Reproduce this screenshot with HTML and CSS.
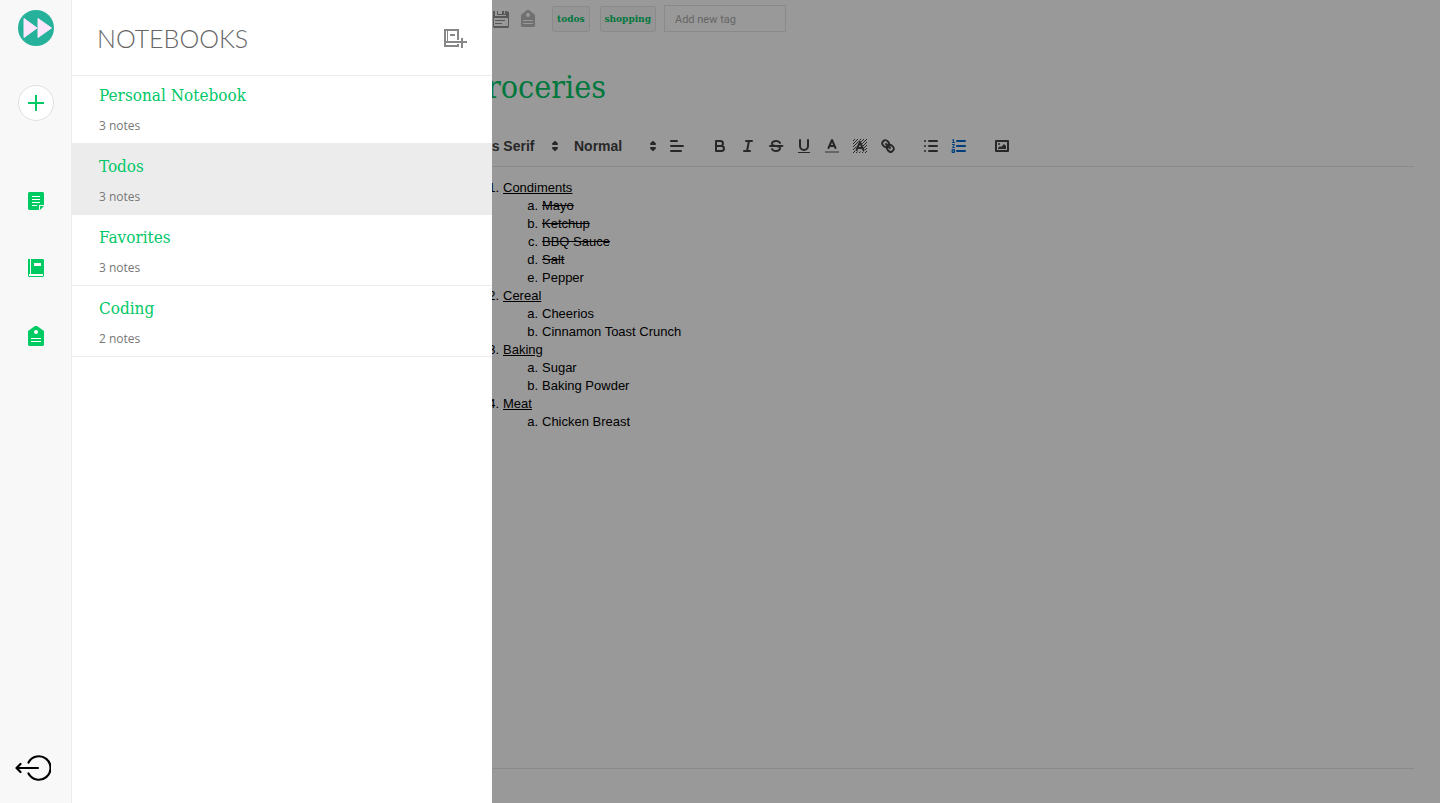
FILE: index.html
```html
<!DOCTYPE html>
<html lang="en">
<head>
<meta charset="utf-8">
<title>Notebooks</title>
<link rel="stylesheet" href="styles.css">
</head>
<body>
<div class="app">
  <nav class="sidebar" aria-label="Main">
    <a class="logo" href="#" aria-label="Home"><svg width="36" height="36" viewBox="0 0 36 36"><circle cx="18" cy="18" r="18" fill="#26b29a"/><path d="M6 8.500l13 9.500-13 9.500zM20 8.500L33.500 18 20 27.500z" fill="#fbe6fb" stroke="#fbe6fb" stroke-linejoin="round"/></svg></a>
    <button class="add" aria-label="New note"><svg width="16" height="16" viewBox="0 0 16 16"><path d="M8 0v16M0 8h16" stroke="#00c965" stroke-width="2"/></svg></button>
    <div class="links">
      <a href="#" aria-label="Notes"><svg width="16" height="18" viewBox="0 0 16 18"><path fill="#00cb63" d="M1 0h14l1 1v12h-5v5H1l-1-1V1z"/><path fill="#00cb63" d="M12 14h4l-4 4z"/><path stroke="#fff" d="M4 4.500h8M4 7.500h8M4 10.500h8M4 13.500h5"/></svg></a>
      <a href="#" aria-label="Notebooks"><svg width="16" height="18" viewBox="0 0 16 18"><path fill="#00cb63" d="M0 0h2v14H0zM3 0h12l1 1v14H3zM0 13h2v2h14v2l-1 1H1l-1-1z"/><path fill="#fff" d="M6 4h7v3H6zM1 15h14v2H1z"/></svg></a>
      <a href="#" aria-label="Tags"><svg width="16" height="20" viewBox="0 0 16 20"><path fill="#00cb63" d="M7 0h2l7 5v14l-1 1H1l-1-1V5z"/><circle cx="8" cy="6" r="2" fill="#fff"/><path stroke="#fff" d="M3 12.500h10M3 15.500h10"/></svg></a>
    </div>
    <button class="logout" aria-label="Log out"><svg width="36" height="26" viewBox="0 0 36 26" fill="none" stroke="#000" stroke-width="2.200" stroke-linecap="round" stroke-linejoin="round"><path d="M13.500 7.500a11.700 11.700 0 1 1 0 11M23 13H1.500M5.500 9l-4 4 4 4"/></svg></button>
  </nav>

  <main class="note">
    <div class="note-bar">
      <button class="bar-icon" aria-label="Save"><svg width="17" height="18" viewBox="0 0 17 18"><path fill="#929292" d="M1 1h2v5h11V1l3 1v15l-1 1H2l-1-1zM5 1h9v4H5z"/><path fill="#fff" d="M6 1h4v3H6zM12 1h1v3h-1zM2 8h14v8H2z"/><path stroke="#929292" d="M3 10.500h10M3 13.500h7"/></svg></button>
      <button class="bar-icon tag-icon" aria-label="Tags"><svg width="14" height="17" viewBox="0 0 14 17"><path fill="#bbb" d="M6 0h2l6 5v11l-1 1H1l-1-1V5z"/><circle cx="7" cy="5" r="2" fill="#fff"/><path stroke="#fff" d="M2 10.500h10M2 13.500h10"/></svg></button>
      <a class="tag" href="#">todos</a>
      <a class="tag" href="#">shopping</a>
      <input class="tag-input" type="text" placeholder="Add new tag" aria-label="Add new tag">
    </div>
    <h1 class="note-title">Groceries</h1>
    <div class="toolbar">
      <div class="formats">
        <label class="picker font"><select aria-label="Font"><option>Sans Serif</option></select><svg viewBox="0 0 18 18"><path class="arrow" d="M7 11l2 2 2-2zM7 7l2-2 2 2z"/></svg></label>
        <label class="picker size"><select aria-label="Size"><option>Normal</option></select><svg viewBox="0 0 18 18"><path class="arrow" d="M7 11l2 2 2-2zM7 7l2-2 2 2z"/></svg></label>
        <button aria-label="Align"><svg viewBox="0 0 18 18"><path d="M3 9h12M3 14h10M3 4h6"/></svg></button>
      </div>
      <div class="formats">
        <button aria-label="Bold"><svg viewBox="0 0 18 18"><path d="M5 4h4.500A2.500 2.500 0 0 1 12 6.500 2.500 2.500 0 0 1 9.500 9H5zM5 9h5.500a2.500 2.500 0 0 1 0 5H5z"/></svg></button>
        <button aria-label="Italic"><svg viewBox="0 0 18 18"><path d="M7 4h6M5 14h6M8 14l2-10"/></svg></button>
        <button aria-label="Strike"><svg viewBox="0 0 18 18"><path class="thin" d="M15.500 8.500h-13v1h13z"/><path class="fill" d="M9.007 8C6.542 7.791 6 7.519 6 6.500 6 5.792 7.283 5 9 5c1.571 0 2.765.679 2.969 1.309a1 1 0 0 0 1.900-.617C13.356 4.106 11.354 3 9 3 6.200 3 4 4.538 4 6.500a3.200 3.200 0 0 0 .5 1.843zM8.984 10C11.457 10.208 12 10.479 12 11.500c0 .708-1.283 1.500-3 1.500-1.571 0-2.765-.679-2.969-1.309a1 1 0 1 0-1.900.617C4.644 13.894 6.646 15 9 15c2.800 0 5-1.538 5-3.500a3.200 3.200 0 0 0-.5-1.843z"/></svg></button>
        <button aria-label="Underline"><svg viewBox="0 0 18 18"><path d="M5 3v6a4 4 0 0 0 4 4 4 4 0 0 0 4-4V3"/><rect class="fill" x="3" y="15" width="12" height="1"/></svg></button>
        <button aria-label="Text color"><svg viewBox="0 0 18 18"><path class="muted" d="M2 15h14"/><path d="M5.500 11L9 3l3.500 8M11.600 9H6.400"/></svg></button>
        <button aria-label="Background color"><svg viewBox="0 0 18 18"><defs><pattern id="hatch" width="3" height="3" patternUnits="userSpaceOnUse"><path class="fill" d="M2 0h1v1H2zM1 1h1v1H1zM0 2h1v1H0z"/></pattern></defs><path fill="url(#hatch)" class="plain" d="M2 2h14v14H2z"/><path class="halo" d="M5.500 13L9 5l3.500 8z"/><path d="M5.500 13L9 5l3.500 8M11.600 11H6.400"/></svg></button>
        <button aria-label="Link"><svg viewBox="0 0 18 18"><path d="M7 7l4 4M8.900 4.577a3.476 3.476 0 0 1 .36 4.679A3.476 3.476 0 0 1 4.577 8.900C3.185 7.500 2.035 6.400 4.217 4.217S7.500 3.185 8.900 4.577zM13.423 9.100a3.476 3.476 0 0 0-4.679-.36 3.476 3.476 0 0 0 .36 4.679c1.392 1.392 2.500 2.542 4.679.36s1.032-3.287-.36-4.679z"/></svg></button>
      </div>
      <div class="formats">
        <button aria-label="Bullet list"><svg viewBox="0 0 18 18"><path d="M7 4h8M7 9h8M7 14h8"/><path d="M3 4h0M3 9h0M3 14h0"/></svg></button>
        <button class="active" aria-label="Numbered list" aria-pressed="true"><svg viewBox="0 0 18 18"><path d="M7 4h8M7 9h8M7 14h8"/><path class="thin" d="M2.500 5.500h2M3.500 5.500v-3l-1 .5M2.500 7.500h2l-2 3h2M2.500 12.500h2v3h-2zM2.500 14h2"/></svg></button>
      </div>
      <div class="formats">
        <button aria-label="Image"><svg viewBox="0 0 18 18"><path d="M3 4h12v10H3z"/><circle class="fill" cx="6" cy="7" r="1"/><path class="fill" d="M5 12v-1l2-2 1 1 3-3 2 2v3z"/></svg></button>
      </div>
    </div>
    <div class="editor">
      <ol>
        <li><u>Condiments</u><ol><li><s>Mayo</s></li><li><s>Ketchup</s></li><li><s>BBQ Sauce</s></li><li><s>Salt</s></li><li>Pepper</li></ol></li>
        <li><u>Cereal</u><ol><li>Cheerios</li><li>Cinnamon Toast Crunch</li></ol></li>
        <li><u>Baking</u><ol><li>Sugar</li><li>Baking Powder</li></ol></li>
        <li><u>Meat</u><ol><li>Chicken Breast</li></ol></li>
      </ol>
    </div>
  </main>

  <div class="overlay">
    <section class="drawer" aria-label="Notebooks">
      <header class="drawer-head">
        <h2>NOTEBOOKS</h2>
        <button aria-label="New notebook"><svg width="24" height="20" viewBox="0 0 24 20" fill="none" stroke="#878787"><path stroke-width="2" d="M15 12V2H2v16h13v-2M2 14h22M19 10v10"/><path d="M4.500 3v10"/><path stroke-width="2" d="M7 7h5"/></svg></button>
      </header>
      <ul class="notebooks">
        <li><a href="#"><strong>Personal Notebook</strong><span>3 notes</span></a></li>
        <li class="selected"><a href="#"><strong>Todos</strong><span>3 notes</span></a></li>
        <li><a href="#"><strong>Favorites</strong><span>3 notes</span></a></li>
        <li><a href="#"><strong>Coding</strong><span>2 notes</span></a></li>
      </ul>
    </section>
  </div>
</div>
</body>
</html>
```
FILE: styles.css
```css
* { box-sizing: border-box; }
body { margin: 0; font-family: "Liberation Sans", Arial, sans-serif; color: #000; background: #fff; }
button { border: 0; padding: 0; background: none; cursor: pointer; }
a { color: inherit; text-decoration: none; }
svg { display: block; }

.app { display: flex; min-height: 100vh; }

.sidebar { flex: none; width: 72px; display: flex; flex-direction: column; align-items: center; padding: 10px 0 22px; background: #f8f8f8; border-right: 1px solid #ececec; }
.add { width: 36px; height: 36px; margin-top: 39px; display: grid; place-items: center; background: #fff; border: 1px solid #e0e0e0; border-radius: 50%; }
.links { display: flex; flex-direction: column; gap: 49px; margin-top: 71px; }
.logout { margin: auto 5px 0 0; }

.note { flex: 1; min-width: 0; display: flex; flex-direction: column; padding: 5px 26px 34px 377px; }
.note-bar { display: flex; align-items: center; height: 27px; padding-left: 43px; }
.tag-icon { margin: 0 17px 0 12px; }
.tag { height: 26px; padding: 0 4px; margin-right: 10px; border: 1px solid #e6e6e6; border-radius: 3px; background: #f8f8f8; color: #00c867; font: 700 10px/24px "DejaVu Serif Condensed", "DejaVu Serif", serif; }
.tag + .tag { margin-right: 8px; }
.tag-input { width: 122px; height: 27px; padding: 2px 10px 0; border: 1px solid #e6e6e6; background: #fff; font: 11px Roboto, sans-serif; }
.tag-input::placeholder { color: #aaa; }
.note-title { margin: 31px 0 0; padding-left: 15px; height: 63px; color: #00c867; font: 400 32px/48px "DejaVu Serif Condensed", "DejaVu Serif", serif; }

.toolbar { display: flex; gap: 15px; padding: 8px; border-bottom: 1px solid #e6e6e6; }
.formats { display: flex; }
.formats button { width: 28px; height: 24px; padding: 3px 5px; }
.toolbar svg { width: 18px; height: 18px; fill: none; stroke: #444; stroke-width: 2; stroke-linecap: round; stroke-linejoin: round; }
.toolbar .fill, .toolbar .arrow { fill: #444; }
.toolbar .fill, .toolbar .plain { stroke: none; }
.toolbar .thin { stroke-width: 1; }
.toolbar .muted { stroke: #aaa; stroke-linecap: butt; }
.toolbar .halo { fill: #fff; stroke: #fff; stroke-width: 3; }
.toolbar .active svg { stroke: #06c; }
.picker { position: relative; height: 24px; }
.picker.font { width: 108px; }
.picker.size { width: 98px; }
.picker select { appearance: none; width: 100%; height: 24px; padding: 0 9px; border: 0; background: none; color: #444; font: 700 14px "Liberation Sans", Arial, sans-serif; }
.picker svg { position: absolute; top: 3px; right: 1px; pointer-events: none; }

.editor { flex: 1; padding: 12px 15px; border-bottom: 1px solid #e6e6e6; font-size: 13px; line-height: 18px; }
.editor ol { list-style: none; margin: 0; padding: 0 0 0 39px; counter-reset: item; }
.editor li { counter-increment: item; }
.editor li::before { content: counter(item) "."; display: inline-block; width: 16px; margin: 0 4px 0 -20px; text-align: right; white-space: nowrap; }
.editor ol ol li::before { content: counter(item, lower-alpha) "."; }

.overlay { position: fixed; inset: 0 0 0 72px; background: rgba(0, 0, 0, 0.4); }
.drawer { width: 420px; height: 100%; background: #fff; }
.drawer-head { display: flex; align-items: center; justify-content: space-between; height: 76px; padding: 0 25px; border-bottom: 1px solid #ececec; }
.drawer-head h2 { margin: 0; color: #666; font: 300 25px/30px Lato, sans-serif; }
.notebooks { list-style: none; margin: 0; padding: 0; }
.notebooks li { border-bottom: 1px solid #ececec; }
.notebooks a { display: flex; flex-direction: column; gap: 9px; padding: 10px 27px 7px; }
.notebooks li:first-child a { padding-top: 7px; }
.notebooks strong { color: #00c867; font: 400 17px/24px "DejaVu Serif Condensed", "DejaVu Serif", serif; }
.notebooks span { color: #777; font: 12px/20px "Open Sans", sans-serif; }
.notebooks .selected { background: #ececec; }
```
